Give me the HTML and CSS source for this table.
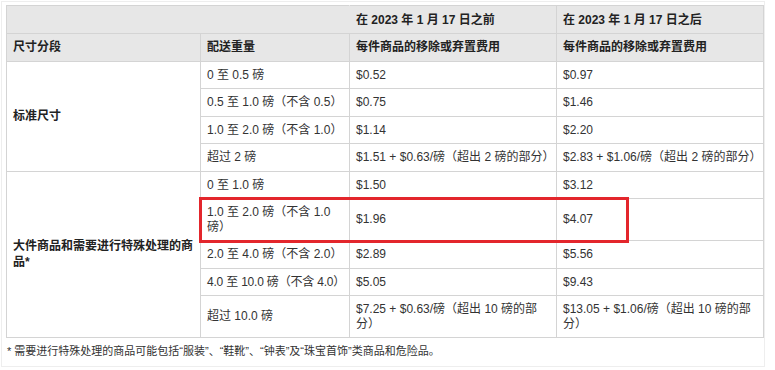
FILE: index.html
```html
<!DOCTYPE html>
<html lang="zh-CN">
<head>
<meta charset="utf-8">
<title>移除或弃置费用</title>
<link rel="stylesheet" href="styles.css">
</head>
<body>
<div class="wrap">
  <table class="fees">
    <colgroup>
      <col class="c1"><col class="c2"><col class="c3"><col class="c4">
    </colgroup>
    <thead>
      <tr class="h1">
        <th colspan="2"></th>
        <th>在 2023 年 1 月 17 日之前</th>
        <th>在 2023 年 1 月 17 日之后</th>
      </tr>
      <tr class="h2">
        <th>尺寸分段</th>
        <th>配送重量</th>
        <th>每件商品的移除或弃置费用</th>
        <th>每件商品的移除或弃置费用</th>
      </tr>
    </thead>
    <tbody>
      <tr>
        <td rowspan="4" class="tier">标准尺寸</td>
        <td class="w">0 至 0.5 磅</td><td>$0.52</td><td>$0.97</td>
      </tr>
      <tr><td class="w">0.5 至 1.0 磅（不含 0.5）</td><td>$0.75</td><td>$1.46</td></tr>
      <tr><td class="w">1.0 至 2.0 磅（不含 1.0）</td><td>$1.14</td><td>$2.20</td></tr>
      <tr><td class="w">超过 2 磅</td><td>$1.51 + $0.63/磅（超出 2 磅的部分）</td><td>$2.83 + $1.06/磅（超出 2 磅的部分）</td></tr>
      <tr>
        <td rowspan="5" class="tier">大件商品和需要进行特殊处理的商品*</td>
        <td class="w">0 至 1.0 磅</td><td>$1.50</td><td>$3.12</td>
      </tr>
      <tr><td class="w">1.0 至 2.0 磅（不含 1.0 磅）</td><td>$1.96</td><td>$4.07</td></tr>
      <tr><td class="w">2.0 至 4.0 磅（不含 2.0）</td><td>$2.89</td><td>$5.56</td></tr>
      <tr><td class="w nowrap">4.0 至 10.0 磅（不含 4.0）</td><td>$5.05</td><td>$9.43</td></tr>
      <tr><td class="w">超过 10.0 磅</td><td>$7.25 + $0.63/磅（超出 10 磅的部分）</td><td>$13.05 + $1.06/磅（超出 10 磅的部分）</td></tr>
    </tbody>
  </table>
  <p class="note">* 需要进行特殊处理的商品可能包括“服装”、“鞋靴”、“钟表”及“珠宝首饰”类商品和危险品。</p>
  <div class="highlight"></div>
</div>
</body>
</html>
```

FILE: styles.css
```css
html, body {
  margin: 0;
  padding: 0;
  background: #ffffff;
}
body {
  font-family: "Liberation Sans", Arial, "Noto Sans CJK SC", sans-serif;
  color: #333333;
}
.wrap {
  position: relative;
  width: 764px;
  margin: 1px 0 0 1px;
  border: 1px solid #eeeeee;
  padding: 3px 3px 0 4px;
  box-sizing: border-box;
}
.fees {
  width: 757px;
  table-layout: fixed;
  border-collapse: collapse;
  font-size: 12px;
  line-height: 14.5px;
  border: 1px solid #d4d4d4;
}
.c1 { width: 194px; }
.c2 { width: 149px; }
.c3 { width: 207px; }
.c4 { width: 207px; }
.fees th,
.fees td {
  border: 1px solid #d4d4d4;
  padding: 6px 7px 6px 6px;
  text-align: left;
  vertical-align: middle;
}
.fees td.w {
  padding-right: 2px;
}
.fees td.nowrap {
  white-space: nowrap;
  letter-spacing: -0.2px;
}
.fees th {
  background: #e7e7e7;
  font-weight: bold;
  color: #222222;
}
.fees .h1 th {
  height: 16px;
  padding-top: 6px;
  padding-bottom: 5px;
}
.fees .h1 th:first-child {
  border-right-color: #e7e7e7;
}
.fees .h1 th:nth-child(2) {
  border-left-color: #d4d4d4;
}
.fees .h2 th {
  padding-top: 6px;
  padding-bottom: 6px;
  height: 14px;
}
.fees td.tier {
  font-weight: bold;
  color: #222222;
  line-height: 16px;
}
.note {
  margin: 0;
  padding: 6px 0 8px 1px;
  font-size: 11px;
  line-height: 14px;
  color: #333333;
}
.highlight {
  position: absolute;
  left: 197px;
  top: 195px;
  width: 430px;
  height: 46px;
  border: 3px solid #e3262c;
  box-sizing: border-box;
}
```
